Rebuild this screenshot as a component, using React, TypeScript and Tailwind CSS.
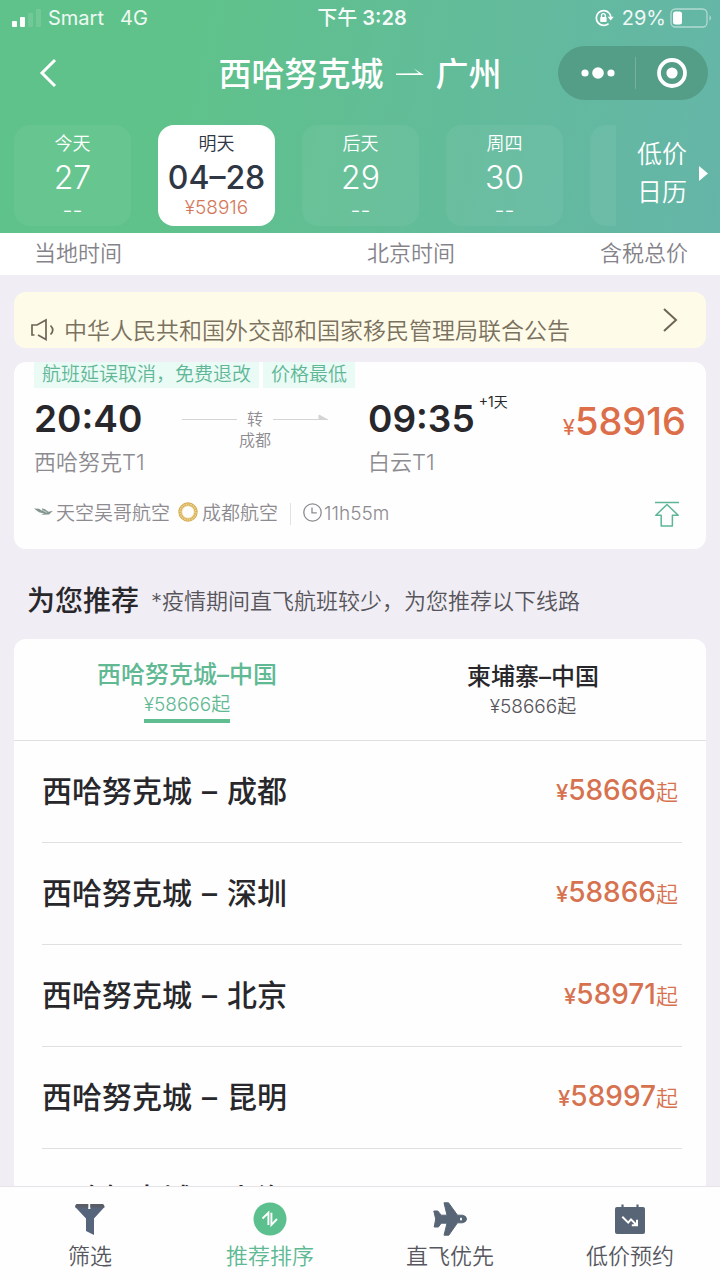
import React from 'react';

const days = [
  { label: '今天', date: '27', price: '--' },
  { label: '明天', date: '04–28', price: '¥58916', active: true },
  { label: '后天', date: '29', price: '--' },
  { label: '周四', date: '30', price: '--' },
];

const routes = [
  { city: '成都', price: '58666' },
  { city: '深圳', price: '58866' },
  { city: '北京', price: '58971' },
  { city: '昆明', price: '58997' },
  { city: '上海', price: '59071' },
];

function StatusBar() {
  return (
    <div className="grid h-9 grid-cols-3 items-center pl-3 pr-2 text-[20px] leading-6">
      <div className="flex items-center text-white/90">
        <svg width="30" height="18" viewBox="0 0 30 18" className="mr-1.5" aria-hidden="true">
          <rect x="0" y="12" width="5" height="6" rx="1" fill="#fff" />
          <rect x="8" y="8" width="5" height="10" rx="1" fill="#fff" />
          <rect x="16" y="4" width="5" height="14" rx="1" fill="#fff" opacity=".12" />
          <rect x="24" y="0" width="5" height="18" rx="1" fill="#fff" opacity=".12" />
        </svg>
        <span className="mr-4">Smart</span>
        <span>4G</span>
      </div>
      <div className="text-center font-semibold text-white/95">
        <span className="font-medium">下午</span> 3:28
      </div>
      <div className="flex items-center justify-end text-white/90">
        <svg width="20" height="18" viewBox="0 0 20 18" className="mr-2" fill="none" aria-hidden="true">
          <path d="M15.3 4.2A7.4 7.4 0 1 0 14.6 14.6" stroke="#fff" strokeWidth="1.7" />
          <path d="M15.3 4.2A7.4 7.4 0 0 1 16.8 8.5" stroke="#fff" strokeWidth="1.7" />
          <path d="M13.6 7.8h6.2L16.7 11.4z" fill="#fff" />
          <rect x="6.2" y="8" width="6.4" height="5" rx=".8" fill="#fff" />
          <path d="M7.5 8V6.6a1.9 1.9 0 0 1 3.8 0V8" stroke="#fff" strokeWidth="1.3" />
        </svg>
        <span className="mr-1">29%</span>
        <svg width="42" height="20" viewBox="0 0 42 20" fill="none" aria-hidden="true">
          <rect x="1" y="1" width="36" height="18" rx="4.5" stroke="#fff" strokeOpacity=".5" strokeWidth="1.3" />
          <rect x="3" y="3.5" width="9" height="13" rx="2.5" fill="#fff" />
          <path d="M39.5 7q3 3 0 6z" fill="#fff" fillOpacity=".5" />
        </svg>
      </div>
    </div>
  );
}

function TitleBar() {
  return (
    <div className="grid h-[74px] grid-cols-[1fr_auto_1fr] items-center px-3">
      <button type="button" aria-label="返回" className="ml-6 w-6">
        <svg width="24" height="32" viewBox="0 0 24 32" fill="none" stroke="#fff" strokeWidth="3" aria-hidden="true">
          <path d="M19 3 6 16 19 29" />
        </svg>
      </button>
      <h1 className="flex items-center pt-0.5 text-[33px] font-medium leading-10">
        西哈努克城
        <svg width="28" height="12" viewBox="0 0 28 12" className="mx-3" aria-hidden="true">
          <path d="M0 5.4 23 5.2 17.5 0.4 28 7H0z" fill="#fff" />
        </svg>
        广州
      </h1>
      <div className="flex h-[54px] w-[150px] items-center justify-self-end rounded-full bg-[#549d87]">
        <button type="button" aria-label="更多" className="flex flex-1 justify-center pl-1">
          <svg width="34" height="14" viewBox="0 0 34 14" fill="#fff" aria-hidden="true">
            <circle cx="4" cy="7" r="3.6" />
            <circle cx="17" cy="7" r="5.8" />
            <circle cx="30" cy="7" r="3.6" />
          </svg>
        </button>
        <span className="h-8 w-px bg-white/20" />
        <button type="button" aria-label="关闭" className="flex flex-1 justify-center">
          <svg width="32" height="32" viewBox="0 0 32 32" aria-hidden="true">
            <circle cx="16" cy="16" r="13" fill="none" stroke="#fff" strokeWidth="3.8" />
            <circle cx="16" cy="16" r="5.6" fill="#fff" />
          </svg>
        </button>
      </div>
    </div>
  );
}

function DateStrip() {
  return (
    <div className="flex pb-[7px] pt-[15px]">
      <div className="flex min-w-0 flex-1 gap-[27px] overflow-hidden pl-[14px]">
        {days.map((d) => (
          <button
            key={d.date}
            type="button"
            className={
              d.active
                ? 'flex h-[101px] w-[117px] shrink-0 flex-col items-center rounded-2xl bg-white pt-[7px] font-[350] text-[#2f3644]'
                : 'flex h-[101px] w-[117px] shrink-0 flex-col items-center rounded-2xl bg-white/5 pt-[7px] font-[350] text-white'
            }
          >
            <span className="text-[18px] leading-6">{d.label}</span>
            <span className={d.active ? 'text-[32px] font-medium leading-[44px]' : 'text-[32px] leading-[44px]'}>
              {d.date}
            </span>
            {d.active ? (
              <span className="text-[19px] leading-4 text-[#d4785a]">{d.price}</span>
            ) : (
              <span className="text-[22px] leading-5">{d.price}</span>
            )}
          </button>
        ))}
        <div className="w-[117px] shrink-0 rounded-2xl bg-white/5" />
      </div>
      <button type="button" className="flex w-[104px] items-center justify-end gap-3 pr-3 text-[25px] font-[350] leading-[38px]">
        <span className="w-[50px] pb-1.5">低价日历</span>
        <svg width="9" height="15" viewBox="0 0 9 15" className="mb-1" aria-hidden="true">
          <path d="M0 0 9 7.5 0 15z" fill="#fff" />
        </svg>
      </button>
    </div>
  );
}

function FlightCard() {
  return (
    <section className="mt-[14px] rounded-xl bg-[#fefefe] pb-[15px] pl-5 pr-5">
      <div className="flex gap-1 text-[19px] font-[350] leading-[26px] text-[#60b795]">
        <span className="bg-[#eafaf5] px-2">航班延误取消，免费退改</span>
        <span className="bg-[#eafaf5] px-2">价格最低</span>
      </div>
      <div className="flex pt-2">
        <div className="w-[148px]">
          <div className="text-[37px] font-semibold leading-[46px] text-[#28272b]">20:40</div>
          <div className="mt-1 text-[22px] font-[350] leading-8 text-[#8d8b90]">西哈努克T1</div>
        </div>
        <div className="flex w-[146px] flex-col items-center pt-3 text-[16px] font-[350] text-[#8d8b90]">
          <div className="flex items-center gap-2.5 leading-[22px]">
            <span className="h-px w-[55px] bg-[#d4d3d6]" />
            转
            <svg width="55" height="7" viewBox="0 0 55 7" className="mb-1" aria-hidden="true">
              <path d="M0 5.5h55M46 1l8 4.5h-8z" stroke="#d4d3d6" fill="#d4d3d6" strokeWidth="1" />
            </svg>
          </div>
          <div className="leading-5">成都</div>
        </div>
        <div className="ml-10 flex-1">
          <div className="flex gap-1 text-[#28272b]">
            <span className="text-[37px] font-semibold leading-[46px]">09:35</span>
            <span className="text-[14px] leading-3">+1天</span>
          </div>
          <div className="mt-1 text-[22px] font-[350] leading-8 text-[#8d8b90]">白云T1</div>
        </div>
        <div className="whitespace-nowrap pt-0.5 text-[38px] font-medium leading-[46px] text-[#dd6e4a]">
          <span className="text-[22px] font-normal">¥</span>58916
        </div>
      </div>
      <div className="mt-4 flex items-center text-[19px] font-[350] leading-10 text-[#8d8b90]">
        <svg width="20" height="12" viewBox="0 0 20 12" className="mb-1 mr-0.5" fill="none" aria-hidden="true">
          <path d="M0 2.5 5 2.8 8.5 5 8 2.2 11 3.2 14.5 5.8 19 4.8 15 8.6 7 8.8 10 7.6 5 6.2Z" fill="#83958f" />
          <path d="M9 4.5 13 6.5" stroke="#c8d3cf" />
        </svg>
        天空吴哥航空
        <svg width="20" height="20" viewBox="0 0 20 20" className="mb-1 ml-2 mr-1" fill="none" aria-hidden="true">
          <circle cx="10" cy="10" r="8" stroke="#d5ae58" strokeWidth="3.4" />
          <circle cx="10" cy="10" r="8" stroke="#f3df9e" strokeWidth="1.2" strokeDasharray="1.5 1" />
          <circle cx="10" cy="10" r="6.3" stroke="#eed185" strokeWidth=".8" />
        </svg>
        成都航空
        <span className="mx-3 h-[22px] w-px bg-[#e2e1e4]" />
        <svg width="19" height="19" viewBox="0 0 19 19" className="mb-1 mr-0.5" fill="none" stroke="#8d8b90" strokeWidth="1.3" aria-hidden="true">
          <circle cx="9.5" cy="9.5" r="8.7" />
          <path d="M9 4.5v5.3h4.8" />
        </svg>
        11h55m
        <button type="button" aria-label="收起" className="ml-auto mr-1.5">
          <svg width="26" height="26" viewBox="0 0 26 26" fill="none" stroke="#5cb697" strokeWidth="1.5" aria-hidden="true">
            <path d="M1 1.5h24M13 3.5 1.8 14.2h5.4V25h11.2V14.2h5.8z" strokeLinejoin="round" />
          </svg>
        </button>
      </div>
    </section>
  );
}

function Recommendations() {
  return (
    <section>
      <div className="flex items-center gap-3 pb-[18px] pl-[13px] pt-8 leading-10">
        <h2 className="text-[28px] font-medium text-[#28272b]">为您推荐</h2>
        <p className="text-[22px] font-[350] text-[#57555b]">*疫情期间直飞航班较少，为您推荐以下线路</p>
      </div>
      <div className="rounded-t-xl bg-[#fefefe]">
        <div className="grid h-[102px] grid-cols-2 border-b border-[#e0dfe2]" role="tablist">
          <button type="button" role="tab" aria-selected="true" className="flex flex-col items-center pt-5 text-[#60b993]">
            <span className="text-[24px] font-medium leading-8">西哈努克城–中国</span>
            <span className="border-b-4 border-[#60bd92] text-[19px] font-[350] leading-7">¥58666起</span>
          </button>
          <button type="button" role="tab" aria-selected="false" className="flex flex-col items-center pt-[22px]">
            <span className="text-[24px] font-medium leading-8 text-[#28272b]">柬埔寨–中国</span>
            <span className="text-[19px] font-[350] leading-7 text-[#57555b]">¥58666起</span>
          </button>
        </div>
        <ul className="pl-7 pr-6">
          {routes.map((r) => (
            <li key={r.city} className="border-b border-[#e0dfe2]">
              <a href="#route" className="flex h-[101px] items-center justify-between pr-1">
                <span className="flex gap-2.5 text-[30px] font-medium text-[#28272b]">
                  <span>西哈努克城</span>
                  <span>–</span>
                  <span>{r.city}</span>
                </span>
                <span className="pb-1 text-[28px] font-medium text-[#d6724f]">
                  <span className="text-[22px]">¥</span>
                  {r.price}
                  <span className="text-[22px] font-[350]">起</span>
                </span>
              </a>
            </li>
          ))}
        </ul>
      </div>
    </section>
  );
}

function FilterIcon() {
  return (
    <svg width="32" height="34" viewBox="0 0 32 34" aria-hidden="true">
      <path d="M3 2H14.2V7H16.4V2H28.5Q30.5 2.5 30.5 5L20 16.5V33L12 29V16.5L1.2 5Q1.2 2.4 3 2Z" fill="#57657c" />
      <path d="M3 2H14.2V5.5H1.3Q1.2 2.4 3 2ZM16.4 2H28.5Q30.5 2.5 30.4 5.5H16.4Z" fill="#5a5d66" />
    </svg>
  );
}

function SortIcon() {
  return (
    <svg width="34" height="34" viewBox="0 0 34 34" fill="none" aria-hidden="true">
      <circle cx="17" cy="17" r="16.5" fill="#5cc08e" />
      <path d="M9.5 16.5 15.4 10.8V23M18.4 10.8V22.8L24 17" stroke="#fff" strokeWidth="1.9" />
    </svg>
  );
}

function PlaneIcon() {
  return (
    <svg width="34" height="34" viewBox="0 0 34 34" aria-hidden="true">
      <path
        d="M11 .8H15.5L24.5 13.2H29.5Q33.5 14 33.5 17T29.5 20.8H24.5L15.8 33.2H11L14 21.2H8.2L5.4 25H1.2L2.7 17 .8 9H4.8L8.2 13.2H14Z"
        fill="#586576"
        stroke="#586576"
        strokeLinejoin="round"
      />
      <ellipse cx="28" cy="17" rx="1" ry="1.6" fill="#fff" />
    </svg>
  );
}

function CalendarIcon() {
  return (
    <svg width="32" height="34" viewBox="0 0 32 34" fill="none" aria-hidden="true">
      <rect x="1" y="5" width="30" height="27" rx="2" fill="#586576" />
      <path d="M8.5 2.5V8M23.5 2.5V8" stroke="#586576" strokeWidth="2.2" />
      <path d="M8.3 14.8 14.2 20.6 17 17.4 22.6 23M17.8 23.2H23V17.8" stroke="#fff" strokeWidth="2" />
    </svg>
  );
}

const tabs = [
  { label: '筛选', icon: <FilterIcon /> },
  { label: '推荐排序', icon: <SortIcon />, active: true },
  { label: '直飞优先', icon: <PlaneIcon /> },
  { label: '低价预约', icon: <CalendarIcon /> },
];

export default function App() {
  return (
    <div className="flex h-screen flex-col overflow-hidden bg-[#f0eef4] font-['Inter','Noto_Sans_CJK_SC',sans-serif]">
      <header className="shrink-0 bg-linear-100 from-[#5fc28a] from-25% to-[#65b5a8] text-white">
        <StatusBar />
        <TitleBar />
        <DateStrip />
      </header>
      <div className="flex h-[42px] shrink-0 items-center bg-white pb-0.5 pl-[34px] pr-8 text-[22px] font-[350] text-[#85838a]">
        <span className="w-[333px]">当地时间</span>
        <span className="flex-1">北京时间</span>
        <span>含税总价</span>
      </div>
      <main className="min-h-0 flex-1 overflow-hidden px-[14px] pt-[17px]">
        <a href="#notice" className="flex h-14 items-center rounded-xl bg-[#fffbe9] pl-4 pr-7 text-[#7a715f]">
          <svg width="26" height="24" viewBox="0 0 26 24" className="mr-2 mt-5 shrink-0" fill="none" stroke="#6d6557" strokeWidth="1.7" aria-hidden="true">
            <path d="M4.5 17H2V7H7L16 2V21.5L8 17M20.5 7.5q4.5 4.5 0 9" />
          </svg>
          <span className="mt-[22px] flex-1 whitespace-nowrap text-[23px] font-[350] leading-8">
            中华人民共和国外交部和国家移民管理局联合公告
          </span>
          <svg width="16" height="24" viewBox="0 0 16 24" fill="none" stroke="#6d6557" strokeWidth="2" aria-hidden="true">
            <path d="M2 1 14 12 2 23" />
          </svg>
        </a>
        <FlightCard />
        <Recommendations />
      </main>
      <nav className="grid shrink-0 grid-cols-4 border-t border-[#e6e4e9] bg-[#fefefe] pb-2 pt-[15px]">
        {tabs.map((t) => (
          <button
            key={t.label}
            type="button"
            className={
              t.active
                ? 'flex flex-col items-center gap-1 text-[22px] font-[350] leading-8 text-[#5fb993]'
                : 'flex flex-col items-center gap-1 text-[22px] font-[350] leading-8 text-[#57585f]'
            }
          >
            {t.icon}
            {t.label}
          </button>
        ))}
      </nav>
    </div>
  );
}
